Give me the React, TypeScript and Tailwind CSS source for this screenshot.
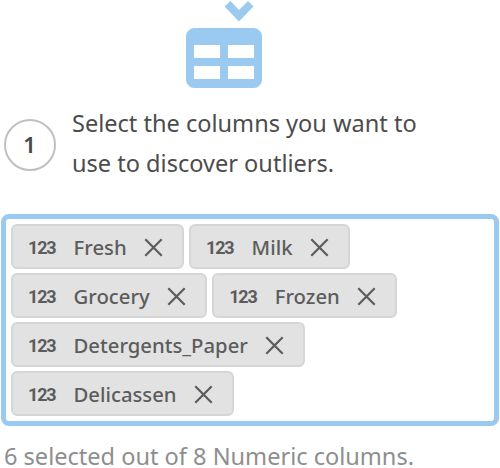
const rows = [["Fresh", "Milk"], ["Grocery", "Frozen"], ["Detergents_Paper"], ["Delicassen"]];

function Chip({ label }: { label: string }) {
  return (
    <div className="flex h-[45px] items-center rounded-[6px] border-2 border-[#d6d6d6] bg-[#e2e2e2] pt-[2px] pl-[15px] pr-[19px] text-[#5c5c5c]">
      <span className="w-[45.5px] font-[Roboto,sans-serif] text-[18px] leading-none font-bold tracking-[-1.2px]">123</span>
      <span className="text-[20.3px] leading-none font-medium">{label}</span>
      <svg className="ml-[17px]" width="19" height="19" viewBox="0 0 19 19" fill="none" stroke="currentColor" strokeWidth="2.2">
        <path d="M1.3 1.3 17.7 17.7M17.7 1.3 1.3 17.7" />
      </svg>
    </div>
  );
}

export default function App() {
  return (
    <main className="h-[468px] w-[500px] overflow-hidden bg-white font-['Noto_Sans',sans-serif]">
      <header className="flex h-[88px] justify-center pr-[52px]">
        <svg width="76" height="88" viewBox="0 0 76 88" fill="#9bcaf0">
          <path d="M44.500 1 53 10l9-9 5.500 5.500L53 21.500 38.500 6.500Z" />
          <path fillRule="evenodd" d="M8 28h60q3 0 5.500 2.500T76 36v44q0 3-2.500 5.500T68 88H8q-3 0-5.500-2.500T0 80V36q0-3 2.500-5.500T8 28ZM8 45v13h26V45ZM42 45v13h26V45ZM8 66v13h26V66ZM42 66v13h26V66Z" />
        </svg>
      </header>
      <section className="mt-[15px] flex h-[81px] items-center pl-1">
        <div className="mt-[2px] flex size-[52px] shrink-0 items-center justify-center rounded-full border-2 border-[#c0c0c0] pr-px text-[22px] font-semibold text-[#484848]">1</div>
        <p className="-mt-[2px] ml-4 text-[23.55px] leading-10 whitespace-nowrap text-[#4c4c4c]">
          Select the columns you want to<br />use to discover outliers.
        </p>
      </section>
      <section className="mt-[30px] ml-[1px] flex h-[212px] w-[498px] flex-col gap-1 rounded-[8px] border-[5px] border-[#9bcaf0] pt-[5px] pl-[5px]">
        {rows.map((row) => (
          <div className="flex gap-[5.5px]" key={row[0]}>
            {row.map((label) => <Chip key={label} label={label} />)}
          </div>
        ))}
      </section>
      <p className="mt-[18px] ml-1 text-[23.55px] leading-6 whitespace-nowrap text-[#8e8e8e]">6 selected out of 8 Numeric columns.</p>
    </main>
  );
}
